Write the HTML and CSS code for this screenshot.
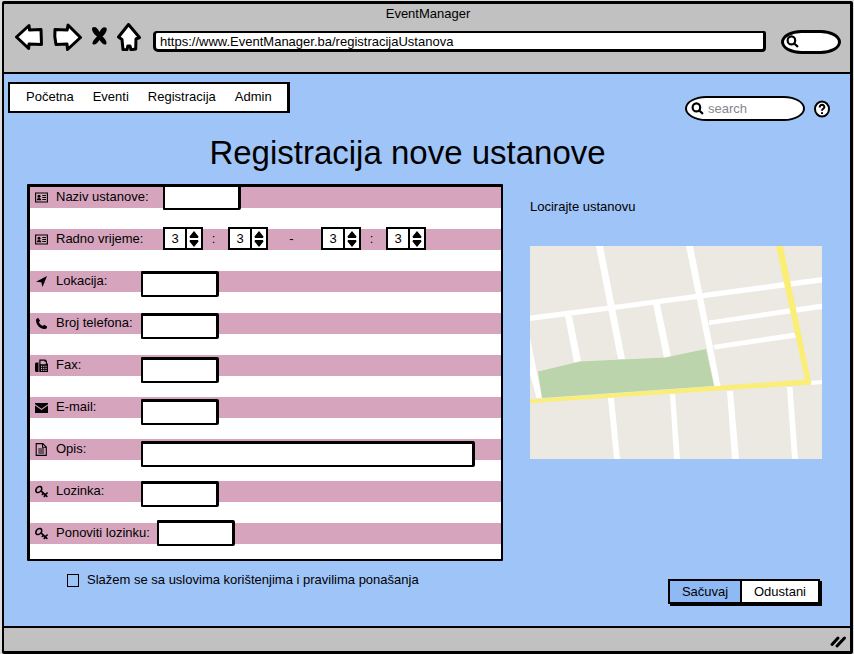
FILE: index.html
```html
<!DOCTYPE html>
<html lang="bs">
<head>
<meta charset="utf-8">
<meta name="viewport" content="width=device-width, initial-scale=1">
<title>EventManager</title>
<link rel="stylesheet" href="styles.css">
</head>
<body>
<svg width="0" height="0" class="sprite" aria-hidden="true">
  <symbol id="lens" viewBox="0 0 12 12"><ellipse cx="5" cy="5" rx="3.500" ry="3.700"/><path d="M7.600 7.800 10.500 10.500"/></symbol>
  <symbol id="card" viewBox="0 0 13 11"><path d="M.6 1h11.800v9H.6z" fill="none" stroke="#000" stroke-width="1.100"/><circle cx="4" cy="4.200" r="1.500"/><path d="M1.800 8.300c0-3 4.500-3 4.500 0zM7.300 3h3.700v1H7.300zm0 2h3.700v1H7.300zm0 2h3.700v1H7.300z"/></symbol>
  <symbol id="key" viewBox="0 0 13 13"><path d="M1 4.500C1.600 2.500 3.800 1.300 5.400 1.600 7.100 2 7 4.200 6.100 5.800 5 7.300 2.700 7.900 1.500 7.100.9 6.600.7 5.500 1 4.500zM6 5.800l5.800 5.600M8.400 8.200 7.300 9.500M10.200 9.900l-.9 1.600M10.200 9.700l1.900-1.600" fill="none" stroke="#000" stroke-width="1.600" stroke-linecap="round"/></symbol>
</svg>
<div class="browser">
  <header class="chrome">
    <div class="chrome-title">EventManager</div>
    <div class="toolbar">
      <div class="tools">
        <button type="button" class="tool" aria-label="Back"><svg width="29" height="28" viewBox="0 0 29 28"><path d="M1.500 14 14 2.500l.5 4.500 11.500-.5.500 15-12.500-.5-.3 4.500z"/></svg></button>
        <button type="button" class="tool" aria-label="Forward"><svg width="29" height="28" viewBox="0 0 29 28"><path d="M27.500 14.500 15 2l-.8 5L2 6.500l-.2 7L3 21.500l11-.5.500 5.500z"/></svg></button>
        <button type="button" class="tool" aria-label="Stop"><svg width="17" height="28" viewBox="0 0 17 28"><path class="cross" d="M1 5c2-2 5-1.500 7.500 4C10.500 5 13 3 15.500 5c1 2-1 6-4 8.500 3 2.500 5 6 3.500 8-2.500.5-4.500-1.500-6.500-4.500-2 3.500-5 5.500-7 4-.5-2.500 2-5 4.500-7.500C2.500 11 .5 7.500 1 5z"/></svg></button>
        <button type="button" class="tool" aria-label="Home"><svg width="24" height="28" viewBox="0 0 24 28"><path d="M11.500 1.500 1.500 14 5 16.500 6 26.500l4 .2.800-3.700 2.200 0 1 3.800 4.700-.8L19 16l3.500-1.500z"/></svg></button>
      </div>
      <input class="url" aria-label="Address" value="https://www.EventManager.ba/registracijaUstanova">
      <label class="pill pill-small"><svg width="13" height="13"><use href="#lens"/></svg><input aria-label="Web search"></label>
    </div>
  </header>

  <main class="page">
    <div class="top">
      <nav class="menu"><a href="#">Početna</a><a href="#">Eventi</a><a href="#">Registracija</a><a href="#">Admin</a></nav>
      <div class="find">
        <label class="pill"><svg width="13" height="13"><use href="#lens"/></svg><input aria-label="search" placeholder="search"></label>
        <button type="button" class="help" aria-label="Help"><svg width="18" height="18" viewBox="0 0 18 18"><ellipse cx="9" cy="9" rx="7" ry="7.500"/><path d="M6.700 7.500C6.500 4 11.700 4 11.300 7.300 11 9 9 8.700 9 10.800M9 12.300v1.600"/></svg></button>
      </div>
    </div>
    <h1>Registracija nove ustanove</h1>

    <form class="content">
      <div class="left">
        <div class="panel">
          <div class="row row-wide">
            <svg class="icon" width="13" height="13"><use href="#card"/></svg>
            <label for="naziv">Naziv ustanove:</label><input id="naziv" class="field field-high">
          </div>
          <div class="row row-wide">
            <svg class="icon" width="13" height="13"><use href="#card"/></svg>
            <label for="od-sat">Radno vrijeme:</label>
            <div class="hours">
              <span class="spin"><input id="od-sat" value="3"><button type="button" aria-label="Promijeni"><svg width="10" height="16" viewBox="0 0 10 16"><path d="M5 0 9.500 5.500 9 7H1L.5 5.500zM1 9h8l.5 1.500L5 16 .5 10.500z"/></svg></button></span>
              <span class="colon">:</span>
              <span class="spin"><input aria-label="Od minuta" value="3"><button type="button" aria-label="Promijeni"><svg width="10" height="16" viewBox="0 0 10 16"><path d="M5 0 9.500 5.500 9 7H1L.5 5.500zM1 9h8l.5 1.500L5 16 .5 10.500z"/></svg></button></span>
              <span class="dash">-</span>
              <span class="spin"><input aria-label="Do sata" value="3"><button type="button" aria-label="Promijeni"><svg width="10" height="16" viewBox="0 0 10 16"><path d="M5 0 9.500 5.500 9 7H1L.5 5.500zM1 9h8l.5 1.500L5 16 .5 10.500z"/></svg></button></span>
              <span class="colon">:</span>
              <span class="spin"><input aria-label="Do minuta" value="3"><button type="button" aria-label="Promijeni"><svg width="10" height="16" viewBox="0 0 10 16"><path d="M5 0 9.500 5.500 9 7H1L.5 5.500zM1 9h8l.5 1.500L5 16 .5 10.500z"/></svg></button></span>
            </div>
          </div>
          <div class="row">
            <svg class="icon" width="13" height="13" viewBox="0 0 13 13"><path d="M12 1 7.500 12 6.300 7.200 1 6.700z"/></svg>
            <label for="lokacija">Lokacija:</label><input id="lokacija" class="field">
          </div>
          <div class="row">
            <svg class="icon" width="13" height="13" viewBox="0 0 13 13"><path d="M3.300 1 5 3.800 3.900 5.300C4.700 7 6 8.200 7.700 9l1.500-1.200 2.900 1.700c0 1.700-1.300 2.700-2.800 2.600C5.200 11.700 1.300 8 1 3.700.9 2.200 1.900 1.100 3.300 1z"/></svg>
            <label for="telefon">Broj telefona:</label><input id="telefon" class="field" type="tel">
          </div>
          <div class="row">
            <svg class="icon" width="13" height="13" viewBox="0 0 13 13"><path d="M0 4.500 1 3.500h2.500V13H1l-1-1zM4.300 13V.5h6L12 2v2.500h1V13zM5.500 1.700v3.500h5.300V2.700H9.500v-1zM6 6.700v1.200h1.200V6.700zm2.200 0v1.200h1.200V6.700zm2.200 0v1.200h1.200V6.700zM6 8.700v1.200h1.200V8.700zm2.200 0v1.200h1.200V8.700zm2.200 0v1.200h1.200V8.700zM6 10.700v1.200h1.200v-1.200zm2.200 0v1.200h1.200v-1.200zm2.200 0v1.200h1.200v-1.200z" fill-rule="evenodd"/></svg>
            <label for="fax">Fax:</label><input id="fax" class="field field-low" type="tel">
          </div>
          <div class="row">
            <svg class="icon" width="13" height="13" viewBox="0 0 13 13"><path d="M0 2h13v1.300L6.500 7.800 0 3.300zM0 4.600l6.500 4.500L13 4.600V12H0z"/></svg>
            <label for="email">E-mail:</label><input id="email" class="field field-low" type="email">
          </div>
          <div class="row">
            <svg class="icon" width="13" height="13" viewBox="0 0 13 13"><path d="M1.200.6h6.600l3.500 3.300v8.500H1.200zM7.500.8v3.400h3.600M3.300 6h5.800M3.300 8h5.800M3.300 10h5.800" fill="none" stroke="#000" stroke-width="1.100"/></svg>
            <label for="opis">Opis:</label><input id="opis" class="field field-low field-long">
          </div>
          <div class="row">
            <svg class="icon" width="13" height="13"><use href="#key"/></svg>
            <label for="lozinka">Lozinka:</label><input id="lozinka" class="field" type="password">
          </div>
          <div class="row row-medium">
            <svg class="icon" width="13" height="13"><use href="#key"/></svg>
            <label for="ponovi">Ponoviti lozinku:</label><input id="ponovi" class="field field-high" type="password">
          </div>
        </div>
        <label class="agree"><input type="checkbox">Slažem se sa uslovima korištenjima i pravilima ponašanja</label>
      </div>

      <aside class="side">
        <p>Locirajte ustanovu</p>
        <svg class="map" viewBox="0 0 292 213" role="img" aria-label="Mapa">
          <path fill="#ebe9e2" d="M0 0h292v213H0z"/>
          <g fill="#fff">
            <path d="M0 69.500 99 57 292 31v5.500L99 62 0 75z"/>
            <path d="M66 0h7l22 113h-7z"/>
            <path d="M156 0h7l27.500 140h-6z"/>
            <path d="M35 70h7l9 45-7 1.500z"/>
            <path d="M123 58h7l11 53-7 1z"/>
            <path d="m179 74.500 113-17v5.500l-113 16z"/>
            <path d="m183 99 81-12.500 3 5-82 12z"/>
            <path d="M0 92l12 60H6.500L0 128z"/>
            <path d="M78 152h6l6 61h-6zM140 148h5l5 65h-6zM197 145h6l6 68h-7zM257 141h5.500l5.500 72h-6zM281 135l11-1v4l-11 1z"/>
          </g>
          <path fill="#bcd4ac" d="M8 125.500 50 115.500l85-4 41-8.500 8 37-172 12z"/>
          <path fill="#faee76" d="M0 153.500 275 133.500 246 0h7l28.500 138.500L0 157z"/>
        </svg>
        <div class="actions"><button type="submit" class="save">Sačuvaj</button><button type="reset">Odustani</button></div>
      </aside>
    </form>
  </main>
  <footer class="status"><svg width="18" height="16" viewBox="0 0 18 16"><path d="M3 11.500 9 5M8 13 15.500 5"/></svg></footer>
</div>
</body>
</html>
```
FILE: styles.css
```css
* { box-sizing: border-box; }
body {
  margin: 0;
  background: #ddd;
  color: #000;
  font: 13px/16px "Liberation Sans", Arial, sans-serif;
}
button, input { font: inherit; color: inherit; margin: 0; padding: 0; border: 0; background: none; outline: 0; }
svg { display: block; flex: none; }
.sprite { position: absolute; }

.browser {
  display: flex;
  flex-direction: column;
  min-height: calc(100vh - 2px);
  margin: 1px 1px 1px 2px;
  border: 3px solid #000;
  border-left-width: 2px;
  border-radius: 2px;
  background: #9fc4f8;
}

/* Window chrome */
.chrome { background: #c1c1c1; border-bottom: 2px solid #000; padding: 2px 9px 15px 11px; }
.chrome-title { text-align: center; line-height: 16px; }
.toolbar { display: flex; align-items: center; height: 35px; }
.tools { display: flex; gap: 9px; margin: 0 12px 6px 0; }
.tool svg { fill: #fff; stroke: #000; stroke-width: 3; stroke-linejoin: round; }
.tool .cross { stroke: none; fill: #000; }
.url {
  flex: 1;
  min-width: 0;
  height: 21px;
  margin: 4px 15px 0 0;
  padding: 0 4px;
  border: 3px solid #000;
  border-top-width: 2px;
  border-radius: 4px 2px 4px 5px;
  background: #fff;
}
.pill {
  display: flex;
  align-items: center;
  gap: 4px;
  width: 120px;
  height: 25px;
  padding: 0 4px;
  border: 2px solid #000;
  border-radius: 22px / 13px;
  background: #fff;
}
.pill svg { fill: none; stroke: #000; stroke-width: 2; stroke-linecap: round; }
.pill input { flex: 1; min-width: 0; }
.pill input::placeholder { color: #85858f; opacity: 1; }
.pill-small { width: 60px; height: 24px; margin-top: 4px; padding: 0 2px; border-width: 3px; }

/* Page */
.page { flex: 1; padding: 8px 19px 22px 4px; }
.top { display: flex; justify-content: space-between; align-items: flex-start; }
.menu {
  display: flex;
  gap: 19px;
  padding: 5px 15px 6px 16px;
  border: 2px solid #000;
  border-right-width: 3px;
  background: #fff;
}
.menu a { color: inherit; text-decoration: none; }
.find { display: flex; align-items: center; gap: 8px; margin-top: 14px; }
.help svg { fill: #fff; stroke: #000; stroke-width: 2; }
h1 { margin: 12px 24px 11px 0; text-align: center; font-size: 33px; line-height: 40px; font-weight: 400; }

.content { display: grid; grid-template-columns: 476fr 292fr; gap: 27px; padding: 0 9px 0 19px; }
.panel {
  border: 3px solid #000;
  border-right-width: 2px;
  border-bottom-width: 2px;
  border-radius: 1px;
  height: 377px;
  background: repeating-linear-gradient(#d6a5bd 0 21px, #fff 21px 42px) padding-box;
}
.row {
  display: grid;
  grid-template-columns: 21px 85px 1fr;
  align-items: start;
  height: 42px;
  padding-left: 5px;
}
.row-wide { grid-template-columns: 21px 107px 1fr; }
.row-medium { grid-template-columns: 21px 101px 1fr; }
.row .icon { margin-top: 4px; }
.row label { margin-top: 2px; white-space: nowrap; }
.field {
  width: 78px;
  height: 26px;
  padding: 0 4px;
  border: 3px solid #000;
  border-left-width: 2px;
  border-bottom-width: 2px;
  border-radius: 1px 2px 2px 1px;
  background: #fff;
}
.field-long { width: 334px; }
.field-high { margin-top: -3px; }
.field-low { margin-top: 2px; }

.hours { display: flex; align-items: center; margin-top: -2px; text-align: center; }
.colon { width: 25px; padding-right: 4px; }
.dash { width: 53px; padding-right: 6px; }
.spin { display: flex; width: 40px; height: 23px; border: 2px solid #000; background: #fff; }
.spin input { flex: 1; min-width: 0; text-align: center; }
.spin button { display: grid; place-items: center; width: 16px; border-left: 2px solid #000; }

.agree { display: flex; align-items: center; gap: 8px; margin: 11px 0 0 40px; }
.agree input { appearance: none; width: 12px; height: 13px; border: 1px solid #000; }

.side { display: flex; flex-direction: column; }
.side p { margin: 15px 0 31px; }
.map { width: 100%; }
.actions {
  display: grid;
  grid-template-columns: 72px 76px;
  margin: 120px 2px 0 auto;
  border: 2px solid #000;
  background: #fff;
  box-shadow: 2px 2px 0 #000;
}
.actions button { height: 21px; }
.actions .save { background: #8fb9f4; border-right: 2px solid #000; }

/* Bottom bar */
.status { display: flex; justify-content: flex-end; align-items: flex-end; height: 25px; padding: 0 3px 2px 0; border-top: 2px solid #000; background: #c1c1c1; }
.status svg { fill: none; stroke: #000; stroke-width: 3; stroke-linecap: round; }
```
